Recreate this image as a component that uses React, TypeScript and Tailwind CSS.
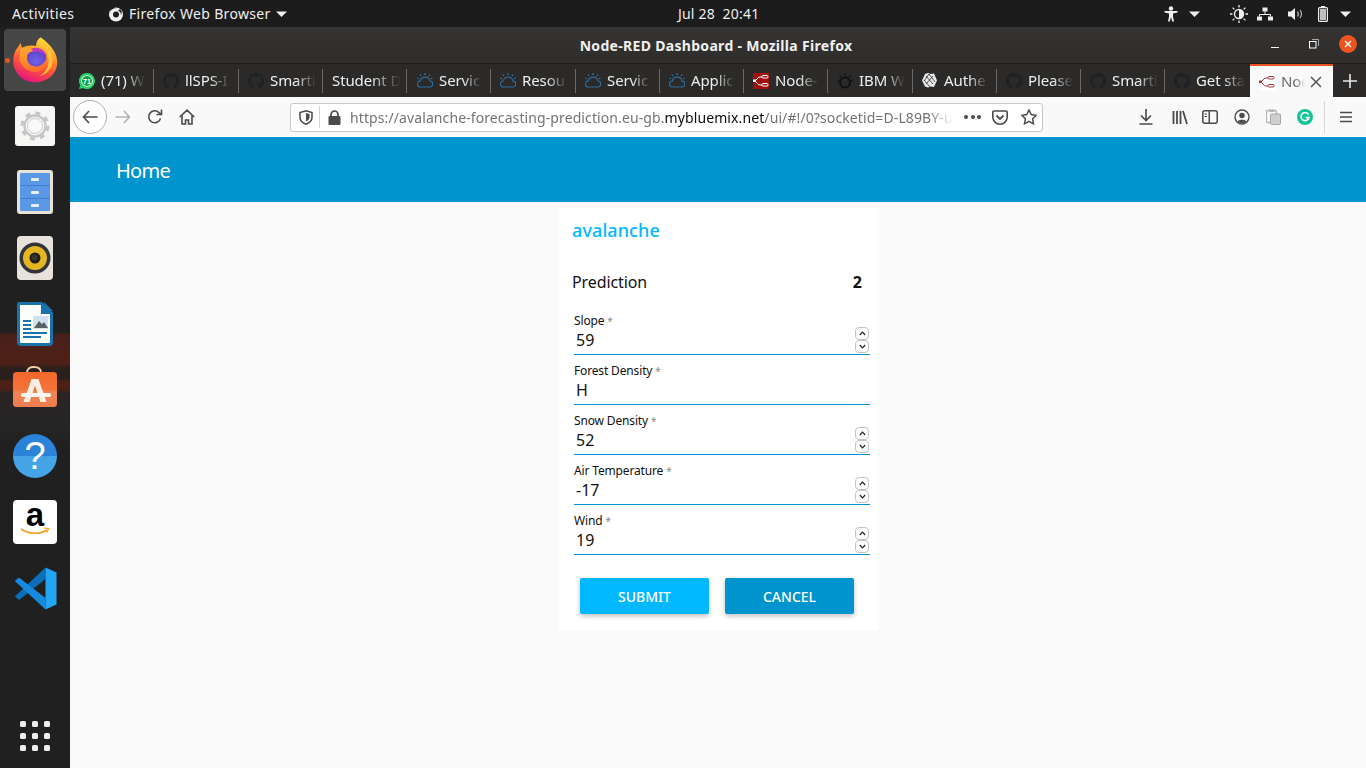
import React from "react";

const UI = "font-['Noto_Sans','Open_Sans',sans-serif]";

function Caret({ className = "" }: { className?: string }) {
  return (
    <svg width="11" height="6" viewBox="0 0 11 6" className={className}>
      <path d="M0 0.5h11L5.5 6z" fill="#eeeeee" />
    </svg>
  );
}

function FirefoxLogo({ size = 46 }: { size?: number }) {
  return (
    <svg width={size} height={size} viewBox="0 0 46 46">
      <defs>
        <linearGradient id="ffa" x1="0.75" y1="0" x2="0.35" y2="1">
          <stop offset="0" stopColor="#ffe03d" />
          <stop offset="0.3" stopColor="#ffa92c" />
          <stop offset="0.62" stopColor="#ff5a36" />
          <stop offset="1" stopColor="#e5127f" />
        </linearGradient>
        <linearGradient id="ffb" x1="0.2" y1="0" x2="0.6" y2="1">
          <stop offset="0" stopColor="#ffa92e" />
          <stop offset="1" stopColor="#ff6a2c" />
        </linearGradient>
        <radialGradient id="ffc" cx="0.5" cy="0.6" r="0.6">
          <stop offset="0" stopColor="#6f63e6" />
          <stop offset="1" stopColor="#5f3cc4" />
        </radialGradient>
      </defs>
      <path d="M28.7.3C33 4 45 12 45.300 25C45.300 37 35 45.300 23 45.300C11 45.300 1.300 36 1.300 24C1.300 17 4 12 6 10L8.700 6L10 11C14 8 20 8 24 9C24 5 26 2 28.700.3Z" fill="url(#ffa)" />
      <path d="M30 6C38 10 42 18 40 28C38 34 32 38 28 39C36 34 38 26 36 18C35 13 32 9 30 6Z" fill="#ffc23a" />
      <circle cx="24" cy="22" r="10.500" fill="url(#ffc)" />
      <path d="M15 15C18 11 24 10 28 11.500C31 12.500 34 15.500 34.500 19C31 15 27 14 23 14.500C20 15 17 15.500 15 15Z" fill="#c53cb2" />
      <path d="M9 11C14 9 19 11 21 14C17 15 15 17 15 20C14.500 25.500 19 30 25 29.500C30 29 33.500 25 34.500 20.500C36 28 30 36 22 35C12 34 6.500 26 8 18Z" fill="url(#ffb)" />
    </svg>
  );
}

function Settings() {
  return (
    <div className="w-[40px] h-[40px] rounded-[3px] bg-[#f6f6f5] flex items-center justify-center">
      <svg width="30" height="30" viewBox="0 0 30 30">
        <circle cx="15" cy="15" r="13" fill="none" stroke="#c6c6c6" strokeWidth="3" strokeDasharray="5 5.200" />
        <circle cx="15" cy="15" r="10.500" fill="#f6f6f5" stroke="#c6c6c6" strokeWidth="2.400" />
        <circle cx="15" cy="15" r="7.500" fill="#f8f8f8" stroke="#cfcfcf" strokeWidth="1" />
      </svg>
    </div>
  );
}

function Files() {
  return (
    <div className="w-[36px] h-[44px] rounded-[3px] bg-[#e6e2d8] flex flex-col p-[3px]">
      <div className="flex-1 rounded-[2px] bg-[#3f7ed2] flex flex-col gap-[1px] overflow-hidden">
        {[0, 1, 2].map((i) => (
          <div key={i} className="flex-1 bg-[#5a97e4] flex items-center justify-center">
            <div className="w-[8px] h-[3px] bg-[#e8eef5] rounded-[1px]" />
          </div>
        ))}
      </div>
    </div>
  );
}

function Rhythmbox() {
  return (
    <div className="w-[36px] h-[44px] rounded-[4px] bg-[#e7e3da] flex items-center justify-center">
      <svg width="32" height="32" viewBox="0 0 32 32">
        <circle cx="16" cy="16" r="15.500" fill="#33333a" />
        <circle cx="16" cy="16" r="12" fill="#e4b622" />
        <circle cx="16" cy="16" r="5.500" fill="#201e18" />
        <circle cx="15.500" cy="15.500" r="3" fill="#3a372c" />
      </svg>
    </div>
  );
}

function Writer() {
  return (
    <svg width="36" height="44" viewBox="0 0 36 44">
      <path d="M2 0h23l11 11v29a4 4 0 0 1-4 4H4a4 4 0 0 1-4-4V2a2 2 0 0 1 2-2z" fill="#1a72aa" />
      <path d="M3 3h21l0 9h9v28a1 1 0 0 1-1 1H4a1 1 0 0 1-1-1z" fill="#fff" />
      <path d="M27 0l9 9h-9z" fill="#1a72aa" />
      <rect x="6" y="18" width="8" height="2" fill="#1a72aa" />
      <rect x="6" y="22" width="8" height="2" fill="#1a72aa" />
      <rect x="6" y="26" width="8" height="2" fill="#1a72aa" />
      <rect x="6" y="30" width="24" height="2" fill="#1a72aa" />
      <rect x="6" y="34" width="18" height="2" fill="#1a72aa" />
      <rect x="16" y="14" width="15" height="13" fill="#cfe3ef" />
      <path d="M17 26l5-7 3 3 2-2 4 6z" fill="#5a5f66" />
    </svg>
  );
}

function Software() {
  return (
    <svg width="44" height="42" viewBox="0 0 44 42" className="mb-[6px]">
      <defs>
        <linearGradient id="swb" x1="0" y1="0" x2="0" y2="1">
          <stop offset="0" stopColor="#f2672a" />
          <stop offset="0.55" stopColor="#f3763a" />
          <stop offset="0.56" stopColor="#ef8558" />
          <stop offset="1" stopColor="#ee7c4e" />
        </linearGradient>
      </defs>
      <path d="M14 7C14 2.500 17 1 21 1S28 2.500 28 7" fill="none" stroke="#f3cfa3" strokeWidth="1.800" />
      <rect x="0" y="6" width="44" height="35" rx="3.500" fill="url(#swb)" />
      <path d="M18.500 13h7L33.500 36h-6L22 19.500 16.500 36h-6z" fill="#fdeee5" />
      <rect x="8" y="27" width="30" height="4" rx="2" fill="#fff6f0" />
    </svg>
  );
}

function Help() {
  return (
    <div className="w-[44px] h-[44px] rounded-full bg-[linear-gradient(#2a83d8_50%,#45a4e6_50%)] flex items-center justify-center">
      <span className="text-white text-[38px] leading-none font-['Liberation_Sans',sans-serif]">?</span>
    </div>
  );
}

function Amazon() {
  return (
    <div className="w-[44px] h-[44px] rounded-[4px] bg-white flex flex-col items-center">
      <span className="text-black font-bold text-[33px] leading-[30px] font-['Liberation_Sans',sans-serif]">a</span>
      <svg width="30" height="9" viewBox="0 0 30 9" className="-mt-[3px]">
        <path d="M1 2c7 5 19 6 26 1" fill="none" stroke="#f79c1c" strokeWidth="1.600" />
        <path d="M24 1l4.500 0.500-1.500 4" fill="none" stroke="#f79c1c" strokeWidth="1.200" />
      </svg>
    </div>
  );
}

function VSCode() {
  return (
    <svg width="43" height="43" viewBox="0 0 43 43">
      <path d="M31.500.5L31.500 12L5 33L.8 29.500Z" fill="#0a6fb8" />
      <path d="M31.500 42.500L31.500 31L5 10.500L.8 14Z" fill="#148bdc" />
      <path d="M31.500.5L42.500 5.500V37.500L31.500 42.500Z" fill="#24a5f3" />
    </svg>
  );
}

function Dock() {
  const cell = "h-[66px] flex items-center justify-center";
  return (
    <div className="w-[70px] shrink-0 flex flex-col bg-[linear-gradient(#202020_0,#202020_305px,#48201a_308px,#4f2117_336px,#2a1f1c_342px,#2a1f1c_352px,#502116_355px,#4a2116_362px,#2a2422_366px,#262626_395px,#202020_420px,#202020_100%)]">
      <div className={cell + " relative"}>
        <div className="w-[62px] h-[62px] rounded-[4px] bg-[#464646] flex items-center justify-center">
          <FirefoxLogo />
        </div>
        <div className="absolute left-[5px] top-[31px] w-[5px] h-[5px] rounded-full bg-[#e95420]" />
      </div>
      <div className={cell}><Settings /></div>
      <div className={cell}><Files /></div>
      <div className={cell}><Rhythmbox /></div>
      <div className={cell}><Writer /></div>
      <div className={cell}><Software /></div>
      <div className={cell}><Help /></div>
      <div className={cell}><Amazon /></div>
      <div className={cell}><VSCode /></div>
      <div className="flex-1" />
      <div className="grid grid-cols-3 gap-x-[6px] gap-y-[6px] w-[30px] ml-[20px] mb-[17px]">
        {Array.from({ length: 9 }).map((_, i) => (
          <div key={i} className="w-[6px] h-[6px] rounded-[1.500px] bg-[#ededed]" />
        ))}
      </div>
    </div>
  );
}

function TopBar() {
  return (
    <div className={"h-[27px] shrink-0 bg-[#1c1c1c] flex items-center text-[#eeeeee] text-[14px] relative " + UI}>
      <span className="ml-[12px] w-[96px] tracking-[0.4px]">Activities</span>
      <svg width="16" height="16" viewBox="0 0 16 16">
        <circle cx="8" cy="8.500" r="7" fill="#eee" />
        <circle cx="8" cy="8.500" r="3" fill="#1c1c1c" />
        <path d="M2 5c1-3 3-4 4-5 0 2 1 2 3 2-3 0-5 1-7 3z" fill="#1c1c1c" />
        <path d="M10 5c2 0 3 2 3 4 1-2 1-4-1-6z" fill="#1c1c1c" />
      </svg>
      <span className="ml-[5px] tracking-[0.33px]">Firefox Web Browser</span>
      <Caret className="ml-[5px]" />
      <div className="flex-1" />
      <svg width="14" height="16" viewBox="0 0 14 16" className="mr-[11px]">
        <circle cx="7" cy="2.500" r="2.200" fill="#eee" />
        <path d="M0.500 5h13v1.600l-4.500 1v3l1 4.900H8.200L7 11l-1.200 4.500H4L5 10.600v-3L0.500 6.600z" fill="#eee" />
      </svg>
      <Caret className="mr-[30px]" />
      <svg width="18" height="18" viewBox="0 0 18 18" className="mr-[9px]">
        <circle cx="9" cy="9" r="4.500" fill="none" stroke="#eee" strokeWidth="1.400" />
        <path d="M9 4.500a4.500 4.500 0 0 1 0 9z" fill="#eee" />
        <path d="M9 0v2.500M9 15.500V18M0 9h2.500M15.500 9H18M2.600 2.600l1.800 1.800M13.600 13.600l1.800 1.800M2.600 15.400l1.800-1.800M13.600 4.400l1.800-1.800" stroke="#eee" strokeWidth="1.300" />
      </svg>
      <svg width="16" height="14" viewBox="0 0 16 14" className="mr-[15px]">
        <rect x="5.500" y="0.500" width="5" height="4" fill="#eee" />
        <rect x="0" y="9.500" width="5" height="4" fill="#eee" />
        <rect x="11" y="9.500" width="5" height="4" fill="#eee" />
        <path d="M8 4.500v3M2.500 9.500v-2h11v2" stroke="#eee" fill="none" />
      </svg>
      <svg width="16" height="14" viewBox="0 0 16 14" className="mr-[14px]">
        <path d="M0 4.500h3L7 1v12L3 9.500H0z" fill="#eee" />
        <path d="M9.500 4.500c1 1.500 1 3.500 0 5M12 3c1.800 2.500 1.800 5.500 0 8" stroke="#bbb" strokeWidth="1.200" fill="none" />
      </svg>
      <svg width="10" height="16" viewBox="0 0 10 16" className="mr-[12px]">
        <rect x="3" y="0" width="4" height="2" fill="#eee" />
        <rect x="0.600" y="1.600" width="8.800" height="13.800" rx="1" fill="none" stroke="#eee" strokeWidth="1.200" />
        <rect x="2" y="3" width="6" height="11" fill="#bfbfbf" />
      </svg>
      <Caret className="mr-[15px]" />
      <span className="absolute left-[678px] top-[3px] whitespace-pre tracking-[0.2px]">Jul 28  20:41</span>
    </div>
  );
}

function TitleBar() {
  return (
    <div className={"h-[37px] shrink-0 bg-[linear-gradient(#353433,#2e2d2c)] border-b border-[#1f1e1d] flex items-center text-[#f0f0f0] relative " + UI}>
      <div className="flex-1 text-center font-bold text-[14px] tracking-[0.31px] pr-[4px]">Node-RED Dashboard - Mozilla Firefox</div>
      <div className="absolute right-[9px] top-[8px] flex items-center">
        <div className="w-[8px] h-[1px] bg-white mr-[30px] mt-[6px]" />
        <svg width="10" height="10" viewBox="0 0 10 10" className="mr-[20px]">
          <rect x="0.500" y="2.500" width="6.500" height="6.500" fill="none" stroke="#fff" />
          <path d="M3 0.500h6.500V7" fill="none" stroke="#aaa" />
        </svg>
        <div className="w-[18px] h-[18px] rounded-full bg-[#e95420] flex items-center justify-center">
          <svg width="8" height="8" viewBox="0 0 8 8"><path d="M1 1l6 6M7 1L1 7" stroke="#fff" strokeWidth="1.300" /></svg>
        </div>
      </div>
    </div>
  );
}

function GitHubIcon() {
  return (
    <svg width="16" height="16" viewBox="0 0 16 16">
      <path
        fill="#1d2226"
        d="M8 0C3.580 0 0 3.580 0 8c0 3.540 2.290 6.530 5.470 7.590.4.070.55-.17.55-.38v-1.340c-2.230.48-2.690-1.070-2.690-1.070-.36-.92-.89-1.170-.89-1.170-.73-.5.05-.49.05-.49.8.06 1.220.82 1.220.82.710 1.220 1.870.87 2.330.66.070-.52.280-.87.510-1.070-1.780-.2-3.640-.89-3.640-3.950 0-.87.310-1.590.820-2.150-.08-.2-.36-1.020.08-2.120 0 0 .67-.21 2.200.82a7.600 7.600 0 0 1 4 0c1.530-1.040 2.200-.82 2.200-.82.440 1.100.16 1.920.08 2.120.51.560.82 1.270.82 2.150 0 3.070-1.870 3.750-3.650 3.950.29.250.54.730.54 1.480v2.200c0 .21.150.46.550.38A8.010 8.010 0 0 0 16 8c0-4.420-3.580-8-8-8z"
      />
    </svg>
  );
}

function IbmCloud() {
  return (
    <svg width="16" height="15" viewBox="0 0 16 15">
      <path d="M3.500 14h9a3 3 0 0 0 .5-6 5 5 0 0 0-9.700 0 3 3 0 0 0 .2 6z" fill="none" stroke="#2b6ca3" strokeWidth="1.200" />
      <path d="M8 0v2M3 1.500l1 1.500M13 1.500l-1 1.500M0.500 5l1.500 1M15.500 5L14 6" stroke="#2b8cc4" strokeWidth="1" />
    </svg>
  );
}

function NodeRedIcon({ active = false }: { active?: boolean }) {
  const c = active ? "#a93a3a" : "#ffffff";
  return (
    <svg width="16" height="16" viewBox="0 0 16 16">
      <rect width="16" height="16" fill={active ? "#ffffff" : "#a10e0e"} />
      <path d="M1 8c3 0 3-4 6-4h2M1 8c3 0 3 4 6 4h2" stroke={c} fill="none" strokeWidth="1" />
      <rect x="9" y="2.500" width="6" height="2.500" rx="1" fill="none" stroke={c} />
      <rect x="9" y="10.500" width="6" height="2.500" rx="1" fill="none" stroke={c} />
      <rect x="0" y="6.500" width="3" height="2.500" fill={c} />
    </svg>
  );
}

function WhatsApp() {
  return (
    <svg width="16" height="16" viewBox="0 0 16 16">
      <path d="M8 0a8 8 0 0 0-6.800 12.200L0 16l3.900-1.100A8 8 0 1 0 8 0z" fill="#25d366" />
      <circle cx="8" cy="8" r="5.800" fill="#fff" />
      <circle cx="8" cy="8" r="5" fill="#0d9f4a" />
      <text x="8" y="10.500" fontSize="7" fontWeight="700" textAnchor="middle" fill="#fff" fontFamily="Liberation Sans">71</text>
    </svg>
  );
}

function IbmW() {
  return (
    <svg width="16" height="16" viewBox="0 0 16 16">
      <circle cx="8" cy="9.500" r="5" fill="none" stroke="#111" strokeWidth="2" />
      <path d="M8 0v3M2.500 2l1.500 2.500M13.500 2L12 4.500M0 7l2.500 1M16 7l-2.500 1" stroke="#111" strokeWidth="1.100" />
    </svg>
  );
}

function Auth0() {
  return (
    <svg width="15" height="15" viewBox="0 0 15 15">
      <path d="M3 1l3 -1 3 1 3-.5 3 7-3 6.500-3-.5-3 1-3-1-3-6z" fill="#e8e8e8" />
      <path d="M4 3l7 8M7 1l6 8M2 7l6 7M11 3l-7 8M7 1L2 8" stroke="#2c2b2a" strokeWidth="0.800" />
    </svg>
  );
}

const tabs: { icon?: React.ReactNode; label: string; pad: number; w: number }[] = [
  { icon: <WhatsApp />, label: "(71) W", pad: 9, w: 84 },
  { icon: <GitHubIcon />, label: "llSPS-I", pad: 9, w: 85 },
  { icon: <GitHubIcon />, label: "Smarti", pad: 9, w: 84 },
  { label: "Student D", pad: 9, w: 84 },
  { icon: <IbmCloud />, label: "Servic", pad: 10, w: 84 },
  { icon: <IbmCloud />, label: "Resou", pad: 9, w: 85 },
  { icon: <IbmCloud />, label: "Servic", pad: 9, w: 84 },
  { icon: <IbmCloud />, label: "Applic", pad: 9, w: 84 },
  { icon: <NodeRedIcon />, label: "Node-", pad: 9, w: 84 },
  { icon: <IbmW />, label: "IBM W", pad: 9, w: 85 },
  { icon: <Auth0 />, label: "Authe", pad: 9, w: 84 },
  { icon: <GitHubIcon />, label: "Please", pad: 9, w: 84 },
  { icon: <GitHubIcon />, label: "Smarti", pad: 9, w: 84 },
  { icon: <GitHubIcon />, label: "Get sta", pad: 9, w: 85 },
];

function TabStrip() {
  return (
    <div className={"h-[33px] shrink-0 bg-[#2b2a29] flex items-stretch text-[15px] text-[#ededed] " + UI}>
      {tabs.map((t, i) => (
        <div key={i} style={{ width: t.w, paddingLeft: t.pad }} className="flex items-center relative shrink-0">
          {t.icon && <span className="w-[22px] shrink-0 flex items-center">{t.icon}</span>}
          <span className="whitespace-nowrap tracking-[-0.1px] flex-1 mr-[9px] [mask-image:linear-gradient(to_right,black_55%,transparent_100%)]">{t.label}</span>
          {i < tabs.length - 1 && <span className="absolute right-0 top-[5px] h-[24px] w-px bg-[#6b6a68]" />}
        </div>
      ))}
      <div className="w-[83px] shrink-0 bg-[#f9f9fa] border-t-[2px] border-[#e95420] flex items-center text-[#6a6a6c] pl-[9px]">
        <span className="w-[22px] flex items-center shrink-0"><NodeRedIcon active /></span>
        <span className="whitespace-nowrap w-[24px] tracking-[-0.25px] [mask-image:linear-gradient(to_right,black_60%,transparent_100%)]">Noc</span>
        <svg width="12" height="12" viewBox="0 0 12 12" className="ml-[5px]"><path d="M1 1l10 10M11 1L1 11" stroke="#55555a" strokeWidth="1.500" /></svg>
      </div>
      <div className="flex-1 flex items-center justify-center">
        <svg width="14" height="14" viewBox="0 0 14 14"><path d="M7 0v14M0 7h14" stroke="#e8e8e8" strokeWidth="1.600" /></svg>
      </div>
    </div>
  );
}

const stroke = { fill: "none", stroke: "#4a4a4f", strokeWidth: 1.6 };

function NavBar() {
  return (
    <div className={"h-[40px] shrink-0 bg-[#f9f9fa] flex items-center relative " + UI}>
      <div className="ml-[3px] w-[34px] h-[34px] rounded-full bg-white border border-[#b1b1b3] flex items-center justify-center shrink-0">
        <svg width="16" height="14" viewBox="0 0 16 14"><path d="M15.500 7H1.500M7 1L1.500 7 7 13" {...stroke} /></svg>
      </div>
      <svg width="16" height="14" viewBox="0 0 16 14" className="ml-[8px]"><path d="M0.500 7h14M9 1l5.500 6L9 13" fill="none" stroke="#b4b4b6" strokeWidth="1.600" /></svg>
      <svg width="16" height="16" viewBox="0 0 16 16" className="ml-[16px]"><path d="M13.500 9.500A6 6 0 1 1 12 3.500l2 1.800M14.500 0.500v5h-5" {...stroke} /></svg>
      <svg width="16" height="16" viewBox="0 0 16 16" className="ml-[16px]"><path d="M0.800 8L8 1.200 15.200 8M3 6.500V15h3.500v-4h3v4H13V6.500" {...stroke} /></svg>
      <div className="ml-[95px] w-[753px] h-[29px] rounded-[3px] bg-white border border-[#c8c8cb] flex items-center shrink-0">
        <svg width="14" height="15" viewBox="0 0 14 15" className="ml-[8px]">
          <path d="M7 0.800l6 1.700v5c0 3.500-3 5.500-6 6.700-3-1.200-6-3.200-6-6.700v-5z" fill="none" stroke="#4a4a4f" strokeWidth="1.500" />
          <path d="M7 3l3.500 1v3.500c0 2-2 3.300-3.500 4z" fill="#4a4a4f" />
        </svg>
        <div className="ml-[6px] w-px h-[22px] bg-[#d4d4d6]" />
        <svg width="13" height="15" viewBox="0 0 13 15" className="ml-[8px]">
          <rect x="0.500" y="6" width="12" height="9" rx="1" fill="#4a4a4f" />
          <path d="M3 6.500V4.500a3.500 3.500 0 0 1 7 0v2" fill="none" stroke="#4a4a4f" strokeWidth="1.700" />
        </svg>
        <div className="ml-[9px] w-[603px] whitespace-nowrap text-[14px] text-[#737373] tracking-[0.1px] [mask-image:linear-gradient(to_right,black_96%,transparent_100%)]">
          https://avalanche-forecasting-prediction.eu-gb.<span className="text-[#0c0c0d]">mybluemix.net</span>/ui/#!/0?socketid=D-L89BY-ui
        </div>
        <span className="ml-[11px] flex gap-[2.500px]">
          {[0, 1, 2].map((i) => <span key={i} className="w-[4px] h-[4px] rounded-full bg-[#4a4a4f]" />)}
        </span>
        <svg width="16" height="15" viewBox="0 0 16 15" className="ml-[11px]">
          <path d="M2 1h12a1.200 1.200 0 0 1 1.200 1.200v4.800a7.200 7.200 0 0 1-14.400 0V2.200A1.200 1.200 0 0 1 2 1z" fill="none" stroke="#4a4a4f" strokeWidth="1.600" />
          <path d="M4.500 5.500L8 9l3.500-3.500" fill="none" stroke="#4a4a4f" strokeWidth="1.800" />
        </svg>
        <svg width="16" height="16" viewBox="0 0 16 16" className="ml-[13px]">
          <path d="M8 1l2.200 4.600 5 .7-3.600 3.500.9 5L8 12.400 3.500 14.800l.9-5L.8 6.300l5-.7z" fill="none" stroke="#4a4a4f" strokeWidth="1.500" />
        </svg>
      </div>
      <svg width="16" height="16" viewBox="0 0 16 16" className="ml-[95px]"><path d="M8 0v11M3 6.500L8 11.500l5-5M1.500 15h13" {...stroke} /></svg>
      <svg width="16" height="15" viewBox="0 0 16 15" className="ml-[18px]"><path d="M1.500 1v13M5 1v13M8.500 1v13M11 1l4 13" fill="none" stroke="#4a4a4f" strokeWidth="1.800" /></svg>
      <svg width="16" height="14" viewBox="0 0 16 14" className="ml-[14px]">
        <rect x="0.800" y="0.800" width="14.400" height="12.400" rx="2" fill="none" stroke="#4a4a4f" strokeWidth="1.500" />
        <rect x="6.500" y="1" width="1.500" height="12" fill="#4a4a4f" />
        <path d="M2.500 4h2.500M2.500 6.500h2.500" stroke="#4a4a4f" />
      </svg>
      <svg width="16" height="16" viewBox="0 0 16 16" className="ml-[16px]">
        <circle cx="8" cy="8" r="7" fill="none" stroke="#4a4a4f" strokeWidth="1.400" />
        <circle cx="8" cy="6.500" r="2.700" fill="#4a4a4f" />
        <path d="M3.500 12.500c1-2.500 8-2.500 9 0-2 2.300-7 2.300-9 0z" fill="#4a4a4f" />
      </svg>
      <svg width="15" height="16" viewBox="0 0 15 16" className="ml-[16px]">
        <rect x="0.500" y="1.500" width="10" height="12" rx="1" fill="none" stroke="#b4b4b6" strokeWidth="1.300" />
        <rect x="4.500" y="5" width="10" height="10.500" rx="1" fill="#cfcfd1" stroke="#a8a8aa" />
        <rect x="3" y="0.500" width="5" height="2.500" fill="#b4b4b6" />
      </svg>
      <div className="ml-[16px] w-[16px] h-[16px] rounded-full bg-[#15c39a] flex items-center justify-center">
        <svg width="10" height="10" viewBox="0 0 10 10"><path d="M8.500 2.500A4 4 0 1 0 9 5.500H5.500" fill="none" stroke="#fff" strokeWidth="1.500" /></svg>
      </div>
      <div className="ml-[11px] w-px h-[32px] bg-[#d7d7d9]" />
      <svg width="12" height="12" viewBox="0 0 12 12" className="ml-[15px]"><path d="M0 1.500h12M0 6h12M0 10.500h12" stroke="#4a4a4f" strokeWidth="1.700" /></svg>
    </div>
  );
}

function Spinner() {
  const btn = "w-[14px] h-[13px] rounded-[4px] border border-[#c4c4c4] bg-white flex items-center justify-center";
  return (
    <div className="flex flex-col mr-[1px] self-start -mt-[3px]">
      <div className={btn}>
        <svg width="7" height="5" viewBox="0 0 7 5"><path d="M0.800 4L3.500 1.200 6.200 4" fill="none" stroke="#222" strokeWidth="1.200" /></svg>
      </div>
      <div className={btn}>
        <svg width="7" height="5" viewBox="0 0 7 5"><path d="M0.800 1L3.500 3.800 6.200 1" fill="none" stroke="#222" strokeWidth="1.200" /></svg>
      </div>
    </div>
  );
}

function Field({ label, value, spinner = true }: { label: string; value: string; spinner?: boolean }) {
  return (
    <div className="h-[50px] flex flex-col justify-end">
      <div className="text-[12px] leading-[14px] text-[#111] flex items-start tracking-[-0.15px] mb-[2px]">
        {label}
        <span className="text-[#8a8a8a] text-[10px] ml-[3px]">*</span>
      </div>
      <div className="h-[25px] border-b border-[#0094ce] flex items-center justify-between">
        <span className="text-[16px] leading-[24px] text-[#111] pl-[2px] pb-[4px]">{value}</span>
        {spinner && <Spinner />}
      </div>
    </div>
  );
}

function Card() {
  return (
    <div className={"ml-[489px] mt-[6px] w-[320px] h-[423px] bg-white flex flex-col " + UI}>
      <div className="pl-[13px] pt-[9px] text-[18px] leading-[27px] font-medium text-[#00b8ff] tracking-[0.1px]">avalanche</div>
      <div className="mt-[25px] pl-[13px] pr-[17px] flex items-center justify-between h-[26px] text-[16px] text-[#111]">
        <span className="tracking-[-0.1px]">Prediction</span>
        <span className="font-bold">2</span>
      </div>
      <div className="pl-[15px] pr-[9px] mt-[10px] flex flex-col">
        <Field label="Slope" value="59" />
        <Field label="Forest Density" value="H" spinner={false} />
        <Field label="Snow Density" value="52" />
        <Field label="Air Temperature" value="-17" />
        <Field label="Wind" value="19" />
      </div>
      <div className="pl-[21px] mt-[23px] flex gap-[16px]">
        <button className="w-[129px] h-[36px] rounded-[2px] bg-[#00b8ff] text-white text-[14px] font-medium shadow-[0_2px_5px_rgba(0,0,0,0.26)]">SUBMIT</button>
        <button className="w-[129px] h-[36px] rounded-[2px] bg-[#0094ce] text-white text-[14px] font-medium shadow-[0_2px_5px_rgba(0,0,0,0.26)]">CANCEL</button>
      </div>
    </div>
  );
}

export default function App() {
  return (
    <div className="w-[1366px] h-[768px] overflow-hidden flex flex-col bg-[#1c1c1c]">
      <TopBar />
      <div className="flex-1 flex min-h-0">
        <Dock />
        <div className="flex-1 flex flex-col min-w-0">
          <TitleBar />
          <TabStrip />
          <NavBar />
          <div className="flex-1 bg-[#fafafa] flex flex-col min-h-0">
            <div className={"h-[65px] shrink-0 bg-[#0094ce] flex items-center pl-[46px] pt-[2px] text-white text-[20px] tracking-[-0.7px] " + UI}>Home</div>
            <Card />
          </div>
        </div>
      </div>
    </div>
  );
}
